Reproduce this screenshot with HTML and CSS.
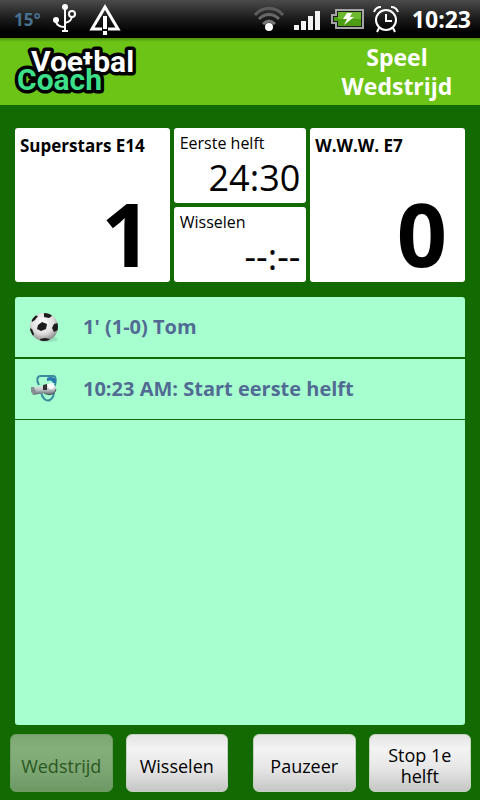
FILE: index.html
```html
<!DOCTYPE html>
<html lang="nl">
<head>
  <meta charset="UTF-8">
  <meta name="viewport" content="width=device-width, initial-scale=1.0">
  <title>Voetbal Coach</title>
  <link rel="stylesheet" href="styles.css">
</head>
<body>
  <div class="status-bar">
    <div class="status-group">
      <span class="temperature">15°</span>
      <svg class="status-icon" width="24" height="30" viewBox="0 0 24 30" fill="none" stroke="#fff" stroke-width="2">
        <path d="M12 3v24M9 27h6M3 16c0 5 3 7 9 7M19 11c0 5-2 7-7 8" />
        <circle cx="12" cy="3" r="3" fill="#fff" stroke="none" />
        <circle cx="3" cy="16" r="3" fill="#fff" stroke="none" />
        <circle cx="19" cy="10" r="3" fill="#222" />
      </svg>
      <svg class="status-icon" width="32" height="33" viewBox="0 0 32 33">
        <path d="M16 4L29 26H3z" fill="none" stroke="#fff" stroke-width="3" />
        <path d="M13 14h6v18h-6z" fill="#0c0c0c" />
        <path d="M14 13h4v13h-4zM14 28h4v4h-4z" fill="#fff" />
      </svg>
    </div>
    <div class="status-group status-right">
      <svg class="status-icon" width="32" height="26" viewBox="0 0 32 26" fill="none" stroke-width="3">
        <path d="M2 9C10 0 22 0 30 9" stroke="#5c5c5c" />
        <path d="M6 13C12 7 20 7 26 13" stroke="#686868" />
        <path d="M10 18C14 14 18 14 22 18" stroke="#777" />
        <circle cx="16" cy="21" r="4" fill="#fff" />
      </svg>
      <svg class="status-icon" width="27" height="24" viewBox="0 0 27 24" fill="#f2f2f2">
        <path d="M0 18h5v5H0zM7 14h5v9H7zM14 9h5v14h-5zM21 4h5v19h-5z" />
      </svg>
      <svg class="status-icon" width="34" height="20" viewBox="0 0 34 20">
        <path d="M6 1h27v18H6v-5H2V6h4z" fill="#1d1d1d" stroke="#a5a5a5" stroke-width="2" />
        <path d="M8 3h23v14H8v-5H4V8h4z" fill="#4c9d14" />
        <path d="M8 3h23v7H8z" fill="#6cb82e" />
        <path d="M17 4h5l-2 4h4l-10 8 3-6h-4z" fill="#fff" />
      </svg>
      <svg class="status-icon" width="26" height="28" viewBox="0 0 26 28" fill="none" stroke="#fff" stroke-width="2">
        <circle cx="13" cy="15" r="10" />
        <path d="M13 9v7h6M1 7C2 4 5 2 8 2M25 7C24 4 21 2 18 2M6 23l-2 4M20 23l2 4" />
      </svg>
      <span class="clock">10:23</span>
    </div>
  </div>

  <header>
    <svg class="logo" width="130" height="58" viewBox="0 0 130 58" role="img" aria-label="Voetbal Coach">
      <text class="logo-text logo-voetbal" x="18" y="29">Voetbal</text>
      <text class="logo-text logo-coach" x="4" y="47">Coach</text>
    </svg>
    <h1>Speel Wedstrijd</h1>
  </header>

  <main>
    <section class="scoreboard">
      <div class="card team">
        <h2>Superstars E14</h2>
        <p class="score">1</p>
      </div>
      <div class="timers">
        <div class="card timer">
          <h3>Eerste helft</h3>
          <p class="time">24:30</p>
        </div>
        <div class="card timer">
          <h3>Wisselen</h3>
          <p class="time">--:--</p>
        </div>
      </div>
      <div class="card team">
        <h2>W.W.W. E7</h2>
        <p class="score">0</p>
      </div>
    </section>

    <ul class="events">
      <li class="event">
        <svg class="event-icon" width="32" height="32" viewBox="0 0 32 32">
          <defs>
            <radialGradient id="ball" cx="45%" cy="35%" r="65%">
              <stop offset="0" stop-color="#fff" />
              <stop offset=".6" stop-color="#e0dede" />
              <stop offset="1" stop-color="#8b8b8b" />
            </radialGradient>
            <clipPath id="ball-edge"><circle cx="15" cy="16" r="14" /></clipPath>
          </defs>
          <ellipse cx="19" cy="28" rx="10" ry="3" fill="#96e2b8" />
          <circle cx="15" cy="16" r="14" fill="url(#ball)" />
          <g clip-path="url(#ball-edge)" fill="#1c1c1c">
            <path d="M9 14l4-3 5 2-1 5-5 2-4-2z" />
            <path d="M15 2h6l2 3-3 2-5-1z" />
            <path d="M2 8l4-4 3 1-3 4-3 2z" />
            <path d="M29 12l-4 1-2 4 2 4 4-2z" />
            <path d="M11 28l5-1 5 1-3 3h-6z" />
            <path d="M0 17l3 1 2 5-1 2-4-4z" />
          </g>
        </svg>
        <span>1' (1-0) Tom</span>
      </li>
      <li class="event">
        <svg class="event-icon" width="32" height="32" viewBox="0 0 32 32">
          <defs>
            <linearGradient id="metal" x1="0" y1="0" x2="0" y2="1">
              <stop offset="0" stop-color="#f4f4f4" />
              <stop offset=".5" stop-color="#c4c8ca" />
              <stop offset="1" stop-color="#5a6468" />
            </linearGradient>
          </defs>
          <path d="M10 12C7 7 8 3 12 3h12c4 0 3 7 1 12M12 19c1 6 5 10 9 8 3-2 4-5 4-9" fill="none" stroke="#3a8c9c" stroke-width="2" />
          <path d="M18 5c3-2 8-1 9 2v3h-3c-1-3-3-3-6-2z" fill="#2878ad" />
          <path d="M2 14l13-1c6-4 12-2 12 3 0 6-7 7-11 4L4 22z" fill="url(#metal)" />
          <path d="M2 14v5l3 3 2-3-2-5z" fill="#858e90" />
          <path d="M14 12l4-1v6h-4z" fill="#333" />
          <circle cx="22" cy="13" r="3" fill="#fff" />
          <path d="M15 20c4 3 11 2 12-4" fill="none" stroke="#4a5256" />
        </svg>
        <span>10:23 AM: Start eerste helft</span>
      </li>
    </ul>
  </main>

  <footer>
    <div class="button-pair">
      <button type="button" disabled>Wedstrijd</button>
      <button type="button">Wisselen</button>
    </div>
    <div class="button-pair">
      <button type="button">Pauzeer</button>
      <button type="button">Stop 1e helft</button>
    </div>
  </footer>
</body>
</html>
```
FILE: styles.css
```css
* {
  margin: 0;
  padding: 0;
  box-sizing: border-box;
}

body {
  min-height: 100vh;
  display: flex;
  flex-direction: column;
  background: #146a02;
  color: #000;
  font-family: "Open Sans", "Noto Sans", sans-serif;
}

.status-bar {
  display: flex;
  justify-content: space-between;
  align-items: center;
  height: 38px;
  padding: 0 9px 0 14px;
  background: linear-gradient(#4b4b4b, #1a1a1a 50%, #000 85%);
  color: #fff;
}

.status-group {
  display: flex;
  align-items: center;
  gap: 12px;
}

.status-right {
  gap: 9px;
}

.status-icon {
  display: block;
}

.temperature {
  color: #48708f;
  font-size: 17px;
  font-weight: 700;
}

.clock {
  margin-left: 4px;
  font-size: 23px;
  font-weight: 700;
}

header {
  display: flex;
  justify-content: space-between;
  align-items: center;
  padding: 5px 19px 4px 13px;
  background: linear-gradient(#4d9210, #6cc417 4px);
}

.logo {
  display: block;
}

.logo-text {
  font-family: Roboto, "Liberation Sans", sans-serif;
  font-size: 30px;
  font-weight: 700;
  stroke: #000;
  stroke-width: 7px;
  stroke-linejoin: round;
  paint-order: stroke;
}

.logo-voetbal {
  fill: #fff;
}

.logo-coach {
  fill: #3de08a;
}

h1 {
  width: 128px;
  color: #fff;
  font-size: 23px;
  line-height: 29px;
  text-align: center;
}

main {
  flex: 1;
  display: flex;
  flex-direction: column;
  gap: 15px;
  padding: 23px 15px 9px;
}

.scoreboard {
  display: grid;
  grid-template-columns: 7fr 6fr 7fr;
  gap: 4px;
}

.card {
  background: #fff;
  border-radius: 3px;
}

.team {
  display: flex;
  flex-direction: column;
  justify-content: space-between;
  padding: 6px 5px 3px;
}

h2 {
  font-size: 17px;
  line-height: 24px;
}

.score {
  padding-right: 13px;
  font-size: 88px;
  font-weight: 700;
  line-height: 92px;
  text-align: right;
}

.timers {
  display: grid;
  gap: 4px;
}

.timer {
  padding: 5px 6px 2px;
}

h3 {
  font-size: 16px;
  font-weight: 400;
  line-height: 21px;
}

.time {
  font-size: 36px;
  line-height: 47px;
  text-align: right;
}

.events {
  flex: 1;
  list-style: none;
  background: #a7ffcf;
  border-radius: 3px;
}

.event {
  display: flex;
  align-items: center;
  gap: 22px;
  padding: 14px;
  border-bottom: 1px solid #146a02;
  color: #526b94;
  font-size: 20px;
  font-weight: 700;
  line-height: 32px;
}

.event:first-child {
  border-bottom-width: 2px;
}

.event-icon {
  flex: none;
}

footer {
  display: grid;
  grid-template-columns: 1fr 1fr;
  gap: 25px;
  padding: 0 9px 8px 10px;
}

.button-pair {
  display: grid;
  grid-template-columns: 1fr 1fr;
  gap: 13px;
}

button {
  min-height: 58px;
  padding: 8px 8px 2px;
  background: linear-gradient(#e4e4e4, #f3f3f3 25%, #e6e6e6 60%, #c6c6c6);
  border: 1px solid #c3d3bf;
  border-radius: 6px;
  color: #000;
  font-family: inherit;
  font-size: 18px;
  line-height: 21px;
  cursor: pointer;
}

button:disabled {
  color: #444;
  opacity: 0.5;
  cursor: default;
}
```
